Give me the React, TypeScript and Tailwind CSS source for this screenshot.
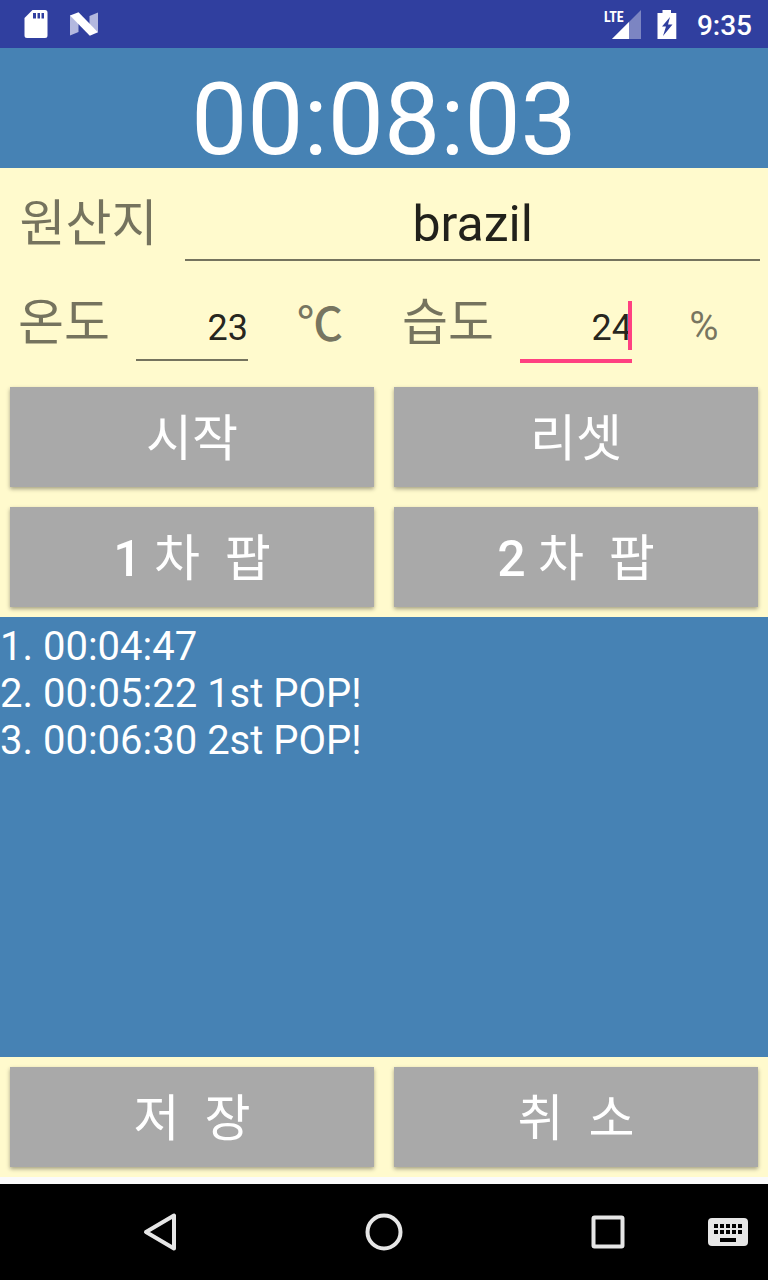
import React, { useState } from "react";

const SdCardIcon = () => (
  <svg width="24" height="28" viewBox="0 0 24 28" aria-hidden="true">
    <path
      fill="#fff"
      fillRule="evenodd"
      d="M8.500 0h12.500a2.500 2.500 0 0 1 2.500 2.500v23a2.500 2.500 0 0 1-2.500 2.500H3a2.500 2.500 0 0 1-2.500-2.500V8zM9 3v5.500h3V3zM13.500 3v5.500h2.500V3zM17.500 3v5.500h2.500V3z"
    />
  </svg>
);

const NougatIcon = () => (
  <svg width="28" height="24" viewBox="0 0 28 24" aria-hidden="true">
    <path fill="#b3b8df" d="M0 3l8.500 8v9L0 23.500zM28 0.500v20l-8.500-8V4z" />
    <path fill="#fff" d="M0 3.500L8.500 0.300 28 20.200 19.800 23.700z" />
  </svg>
);

const SignalIcon = () => (
  <svg width="29" height="29" viewBox="0 0 29 29" aria-hidden="true">
    <path fill="#7c85c2" d="M29 0v29H0z" />
    <path fill="#fff" d="M17 12v17H0z" />
  </svg>
);

const BatteryIcon = () => (
  <svg width="20" height="29" viewBox="0 0 20 29" aria-hidden="true">
    <path
      fill="#fff"
      fillRule="evenodd"
      d="M5.500 0h8.500v3h5.300v26H0.500V3h5zM13 7L5 16.500h4L6 26l9.500-11.500h-4.500z"
    />
  </svg>
);

const BackIcon = () => (
  <svg width="40" height="40" viewBox="0 0 40 40" fill="none" aria-hidden="true">
    <path d="M34 3.500v33L6 20z" stroke="#e6e6e6" strokeWidth="4" strokeLinejoin="round" />
  </svg>
);

const HomeIcon = () => (
  <svg width="40" height="40" viewBox="0 0 40 40" fill="none" aria-hidden="true">
    <circle cx="20" cy="20" r="16.500" stroke="#e6e6e6" strokeWidth="4" />
  </svg>
);

const RecentsIcon = () => (
  <svg width="40" height="40" viewBox="0 0 40 40" fill="none" aria-hidden="true">
    <rect x="5.500" y="5.500" width="29" height="29" rx="1" stroke="#e6e6e6" strokeWidth="4" />
  </svg>
);

const KeyboardIcon = () => (
  <svg width="40" height="28" viewBox="0 0 40 28" aria-hidden="true">
    <rect width="40" height="28" rx="4" fill="#e6e6e6" />
    {[6, 12, 18, 24, 30].map((x) => (
      <g key={x} fill="#000">
        <rect x={x} y="6" width="4" height="4" />
        <rect x={x} y="12" width="4" height="4" />
      </g>
    ))}
    <rect x="12" y="20" width="16" height="4" fill="#000" />
  </svg>
);

const ActionButton = ({ children }: { children: React.ReactNode }) => (
  <button
    type="button"
    className="h-[100px] bg-[#a9a9a9] pt-1 text-[50px] leading-[58px] whitespace-pre text-white shadow-[0_2px_4px_rgba(0,0,0,0.35)]"
  >
    {children}
  </button>
);

const records = ["1. 00:04:47", "2. 00:05:22 1st POP!", "3. 00:06:30 2st POP!"];

export default function App() {
  const [origin, setOrigin] = useState("brazil");
  const [temperature, setTemperature] = useState("23");
  const [humidity, setHumidity] = useState("24");

  return (
    <div className="flex min-h-screen flex-col bg-[#fafafa] font-['Roboto','Noto_Sans_CJK_KR',sans-serif]">
      <header className="flex h-12 items-center justify-between bg-[#303f9f] pr-4 pl-6 text-white">
        <div className="flex items-center gap-[22px]">
          <SdCardIcon />
          <NougatIcon />
        </div>
        <div className="flex items-center">
          <div className="relative pl-2">
            <span className="absolute -top-[3px] left-0 font-['Liberation_Sans_Narrow','Roboto_Condensed','Roboto',sans-serif] text-[14px] leading-5 font-bold">
              LTE
            </span>
            <SignalIcon />
          </div>
          <div className="ml-4">
            <BatteryIcon />
          </div>
          <span className="ml-5 pt-1 text-[28px] leading-8 font-medium">9:35</span>
        </div>
      </header>

      <main className="flex flex-1 flex-col bg-[#fffacd]">
        <h1 className="bg-[#4682b4] pt-6 text-center text-[100px] leading-[96px] text-white">
          00:08:03
        </h1>

        <form className="pb-[9px] text-[50px] leading-[58px] text-black/54">
          <div className="grid h-[100px] grid-cols-[3fr_10fr] items-baseline pt-[27px]">
            <label htmlFor="origin" className="text-center">
              원산지
            </label>
            <input
              id="origin"
              value={origin}
              onChange={(e) => setOrigin(e.target.value)}
              className="mx-2 min-w-0 border-b-2 border-black/54 pb-1.5 text-center text-black/87 outline-none"
            />
          </div>

          <div className="grid h-[100px] grid-cols-6 items-baseline pt-[23px] text-center">
            <label htmlFor="temperature">온도</label>
            <input
              id="temperature"
              inputMode="numeric"
              value={temperature}
              onChange={(e) => setTemperature(e.target.value)}
              className="mx-2 min-w-0 border-b-2 border-black/54 pb-2.5 text-right text-[36px] leading-[42px] text-black/87 outline-none"
            />
            <span className="font-['Noto_Sans_CJK_KR',sans-serif] text-[46px] font-medium">℃</span>
            <label htmlFor="humidity">습도</label>
            <div className="relative mx-2 flex">
              <input
                id="humidity"
                inputMode="numeric"
                value={humidity}
                onChange={(e) => setHumidity(e.target.value)}
                className="w-full min-w-0 border-b-4 border-[#ff4081] pb-2.5 text-right text-[36px] leading-[42px] text-black/87 caret-transparent outline-none"
              />
              <span className="absolute -top-1.5 right-0 h-[49px] w-1 bg-[#ff4081]" />
            </div>
            <span className="text-[40px]">%</span>
          </div>
        </form>

        <div className="grid grid-cols-2 gap-5 p-2.5">
          <ActionButton>시작</ActionButton>
          <ActionButton>리셋</ActionButton>
          <ActionButton>
            <span className="font-medium">1</span> 차{"  "}팝
          </ActionButton>
          <ActionButton>
            <span className="font-medium">2</span> 차{"  "}팝
          </ActionButton>
        </div>

        <ol className="flex-1 bg-[#4682b4] pt-1.5 text-[40px] leading-[47px] text-white">
          {records.map((record) => (
            <li key={record}>{record}</li>
          ))}
        </ol>

        <div className="grid grid-cols-2 gap-5 p-2.5">
          <ActionButton>저{"  "}장</ActionButton>
          <ActionButton>취{"  "}소</ActionButton>
        </div>
      </main>

      <nav className="mt-[7px] flex h-24 items-center bg-black pr-5 pl-12">
        <button type="button" aria-label="Back" className="flex flex-1 justify-center">
          <BackIcon />
        </button>
        <button type="button" aria-label="Home" className="flex flex-1 justify-center">
          <HomeIcon />
        </button>
        <button type="button" aria-label="Recents" className="flex flex-1 justify-center">
          <RecentsIcon />
        </button>
        <button type="button" aria-label="Keyboard" className="-ml-3">
          <KeyboardIcon />
        </button>
      </nav>
    </div>
  );
}
